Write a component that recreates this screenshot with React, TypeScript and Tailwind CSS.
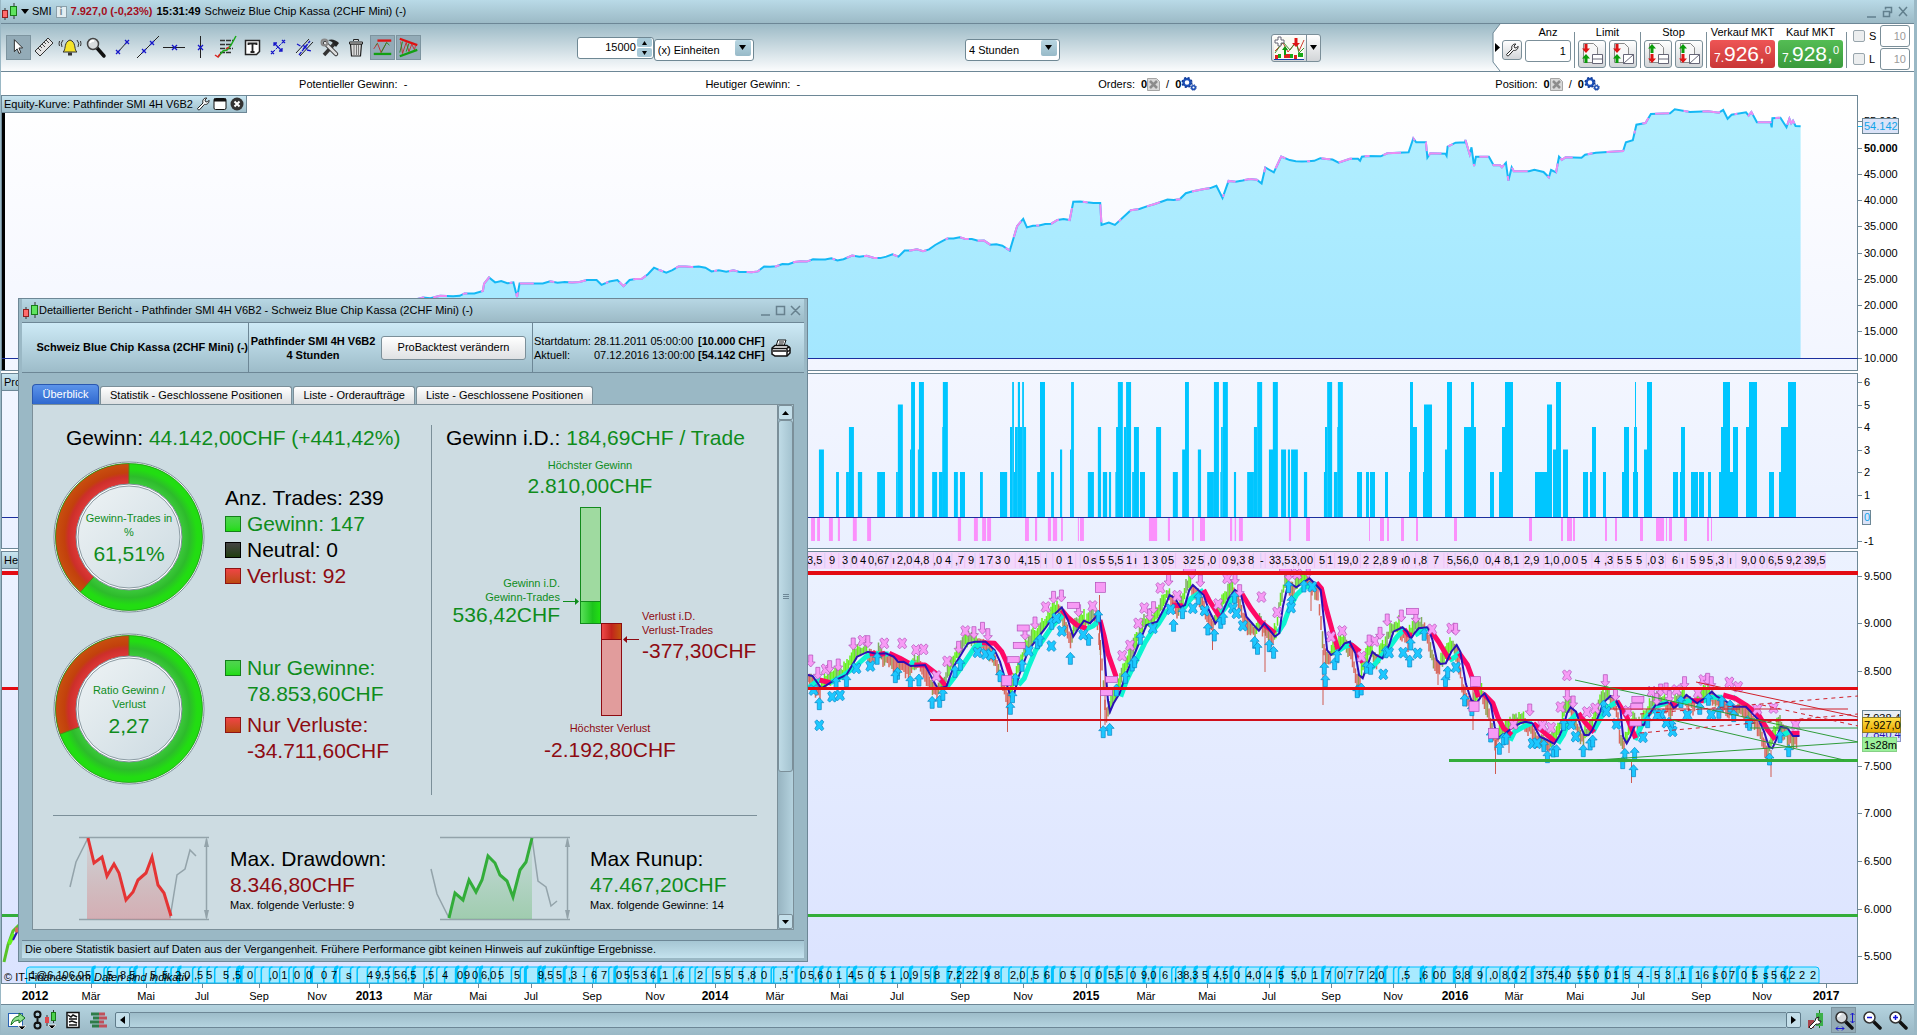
import type { ReactNode } from 'react';

type Point = [number, number];

// digitised tracks are stored in their own grid and scaled to chart units here
const place = (ox: number, oy: number, sx: number, sy: number, pts: Point[]): Point[] =>
  pts.map(([x, y]) => [ox + x / sx, oy + y / sy]);

const left = (pts: Point[]) => place(800, 360, 2.8, 3, pts);
const right = (pts: Point[]) => place(1350, 540, 2.765, 3, pts);
const line = (pts: Point[]) => pts.map(([x, y]) => `${x.toFixed(1)},${y.toFixed(1)}`).join(' ');

// small repeatable noise source, so the drawing is the same on each render
const noise = (n: number) => {
  const v = Math.sin(n * 127.1) * 43758.5453;
  return v - Math.floor(v);
};

/* ---------- equity curve ---------- */

const equityCourse: Point[] = [
  ...place(0, 0, 0.818, 0.818, [
    [340, 245], [352, 244], [360, 242], [376, 242], [380, 240], [388, 240], [395, 238], [396, 232], [400, 227], [405, 231], [420, 231], [423, 243], [425, 232], [432, 232], [450, 230],
    [468, 231], [480, 229], [488, 229], [492, 233], [505, 229], [510, 234], [515, 229], [525, 228], [535, 219], [545, 223], [555, 218], [577, 219],
    [582, 222], [600, 221], [620, 222], [625, 218], [640, 216], [660, 214], [665, 212], [690, 212], [697, 209], [715, 211], [730, 208], [735, 210],
    [740, 205], [760, 204], [775, 195], [785, 194], [820, 201], [826, 205], [832, 185], [837, 179], [840, 186], [860, 183], [865, 180], [875, 180],
    [878, 165], [900, 166], [901, 184], [907, 182], [912, 184], [925, 172], [932, 171], [950, 165], [965, 163], [970, 158], [995, 152], [1000, 162],
    [1005, 148], [1028, 147], [1032, 150], [1035, 137], [1042, 141], [1048, 128], [1055, 131], [1065, 132], [1085, 130], [1095, 133],
  ]),
  ...place(1350, 90, 2.765, 3, [
    [0, 206], [22, 206], [28, 212], [33, 200], [48, 198], [85, 199], [103, 190], [162, 187], [175, 145], [183, 157], [210, 157], [214, 203], [222, 190],
    [264, 191], [267, 197], [270, 170], [292, 158], [318, 157], [319, 150], [331, 193], [336, 172], [343, 228], [348, 200], [384, 200], [397, 226],
    [415, 226], [420, 232], [431, 218], [438, 272], [447, 232], [453, 244], [495, 244], [510, 239], [535, 246], [550, 262], [556, 240], [570, 247],
    [578, 200], [586, 210], [596, 202], [640, 203], [650, 194], [680, 188], [755, 183], [763, 157], [782, 151], [792, 104], [817, 99], [832, 72],
    [885, 70], [898, 58], [940, 66], [990, 64], [1020, 68], [1032, 60], [1044, 86], [1055, 74], [1095, 67], [1102, 77], [1110, 66], [1125, 97],
    [1163, 97], [1166, 112], [1168, 85], [1190, 83], [1207, 112], [1215, 86], [1220, 100], [1225, 92], [1232, 108], [1246, 109],
  ]),
];

const equity: Point[] = equityCourse.flatMap((p, i) => {
  const next = equityCourse[i + 1];
  if (!next || next[0] - p[0] < 12 || p[0] > 1345) return [p];
  const steps = Math.floor((next[0] - p[0]) / 6);
  return [p, ...Array.from({ length: steps - 1 }, (_, k): Point => {
    const t = (k + 1) / steps;
    return [p[0] + (next[0] - p[0]) * t, p[1] + (next[1] - p[1]) * t + (noise(i * 31 + k) - 0.5) * 3];
  })];
});

/* ---------- position bars: [x, width, units] ---------- */

const barsLeft = [
  [53, 14, 3], [101, 8, 2], [129, 8, 2], [137, 14, 4], [162, 12, 2], [216, 22, 2], [269, 5, 2], [274, 14, 5], [308, 3, 3], [311, 11, 6], [330, 3, 3], [333, 14, 6],
  [370, 14, 2], [389, 11, 2], [398, 2, 4], [400, 14, 6], [431, 11, 2], [448, 14, 2], [504, 8, 2], [560, 20, 2], [588, 6, 4], [594, 5, 6], [599, 4, 2], [602, 8, 4],
  [610, 6, 6], [616, 6, 4], [622, 5, 6], [627, 6, 4], [664, 8, 2], [672, 14, 6], [703, 8, 2], [728, 6, 3], [756, 3, 3], [759, 8, 6], [806, 17, 2],
  [834, 9, 4], [848, 12, 2], [865, 6, 2], [883, 4, 2], [885, 6, 4], [890, 14, 6], [907, 6, 4], [913, 14, 6], [930, 5, 2], [935, 14, 4], [952, 14, 2],
  [997, 14, 4], [1044, 14, 2], [1070, 8, 3], [1078, 11, 6], [1114, 9, 3], [1140, 19, 2], [1159, 14, 6], [1177, 2, 2], [1179, 5, 4], [1184, 14, 6],
  [1215, 6, 2], [1252, 19, 2], [1271, 9, 4], [1280, 14, 6], [1313, 12, 3], [1324, 14, 6], [1347, 14, 3], [1366, 6, 3], [1375, 19, 3], [1411, 9, 2],
  [1467, 4, 2], [1470, 6, 4], [1476, 14, 6], [1495, 10, 2], [1504, 2, 4], [1506, 14, 6],
  [31, 11, -1], [48, 8, -1], [81, 11, -1], [106, 6, -1], [148, 11, -1], [188, 11, -1], [442, 9, -1], [487, 11, -1], [510, 11, -1], [524, 11, -1],
  [630, 11, -1], [658, 6, -1], [694, 9, -1], [708, 12, -1], [731, 5, -1], [778, 3, -1], [784, 11, -1], [977, 23, -1], [1030, 6, -1], [1098, 5, -1],
  [1120, 14, -1], [1204, 6, -1], [1217, 4, -1], [1229, 11, -1], [1369, 6, -1], [1417, 11, -1],
];

const barsRight = [
  [51, 15, 2], [78, 9, 2], [90, 15, 2], [135, 9, 2], [207, 3, 2], [210, 9, 6], [219, 12, 4], [249, 3, 2], [252, 24, 5], [315, 6, 3], [321, 15, 6],
  [372, 21, 4], [393, 9, 6], [402, 6, 4], [450, 12, 2], [477, 9, 2], [486, 9, 4], [495, 24, 6], [585, 36, 2], [621, 15, 5], [639, 9, 3], [648, 15, 6],
  [669, 15, 3], [729, 15, 2], [750, 6, 2], [756, 12, 4], [789, 9, 2], [846, 6, 2], [852, 15, 4], [879, 3, 2], [882, 9, 4], [885, 3, 6], [891, 3, 2],
  [912, 9, 3], [921, 15, 6], [999, 15, 2], [1020, 3, 2], [1023, 12, 4], [1053, 21, 2], [1077, 15, 2], [1104, 9, 2], [1137, 6, 2], [1143, 6, 4],
  [1149, 21, 6], [1170, 9, 2], [1179, 15, 4], [1218, 9, 4], [1227, 24, 6], [1287, 15, 2], [1317, 6, 2], [1323, 21, 4], [1344, 24, 6],
  [87, 3, -1], [120, 12, -1], [141, 6, -1], [183, 9, -1], [228, 6, -1], [342, 9, -1], [567, 9, -1], [663, 6, -1], [681, 15, -1], [699, 6, -1],
  [795, 6, -1], [825, 6, -1], [900, 9, -1], [948, 24, -1], [978, 3, -1], [987, 9, -1], [1032, 9, -1], [1101, 6, -1], [1113, 3, -1],
];

const bars = [
  ...barsLeft.map(([x, w, v]) => ({ x: 800 + x / 2.8, w: w / 2.8, v })),
  ...barsRight.map(([x, w, v]) => ({ x: 1340 + x / 3, w: w / 3, v })),
];

/* ---------- price, averages and markers ---------- */

const average: Point[] = [
  ...left([
    [22, 945], [35, 948], [60, 985], [90, 965], [130, 945], [160, 890], [190, 875], [215, 882], [240, 880], [262, 890], [275, 906], [290, 905], [310, 918], [350, 915],
    [370, 955], [385, 985], [410, 980], [430, 920], [470, 850], [490, 845], [520, 845], [545, 870], [560, 905], [575, 960], [588, 1005], [600, 1000],
    [612, 950], [640, 870], [665, 835], [690, 800], [715, 760], [733, 742], [750, 780], [765, 830], [780, 805], [795, 782], [812, 790], [825, 775],
    [838, 758], [852, 880], [862, 1020], [868, 1055], [878, 1030], [895, 1000], [912, 945], [930, 900], [970, 795], [1000, 785], [1020, 745],
    [1035, 705], [1050, 715], [1065, 742], [1078, 735], [1090, 690], [1100, 675], [1115, 690], [1130, 705], [1145, 750], [1163, 790], [1180, 765],
    [1200, 715], [1218, 690], [1235, 705], [1250, 770], [1270, 795], [1285, 812], [1300, 790], [1330, 830], [1342, 820], [1352, 740], [1365, 680],
    [1375, 672], [1390, 682], [1405, 670], [1427, 655], [1445, 675], [1458, 690], [1468, 790], [1476, 870], [1487, 885], [1510, 870], [1525, 850], [1540, 845],
  ]),
  ...right([
    [0, 308], [15, 340], [25, 405], [35, 415], [50, 370], [62, 335], [72, 345], [90, 355], [108, 315], [120, 275], [145, 262], [158, 275], [168, 297],
    [178, 280], [190, 265], [215, 262], [228, 300], [240, 360], [250, 372], [265, 370], [280, 335], [295, 315], [305, 335], [320, 430], [335, 480],
    [350, 490], [362, 470], [372, 460], [390, 495], [400, 560], [410, 595], [420, 585], [430, 580], [450, 562], [470, 550], [485, 545], [505, 550],
    [525, 590], [545, 600], [565, 612], [580, 585], [590, 560], [600, 520], [610, 502], [625, 515], [640, 565], [648, 585], [660, 585], [670, 570],
    [690, 520], [700, 488], [720, 468], [735, 478], [748, 510], [755, 590], [765, 610], [775, 590], [790, 550], [812, 555], [830, 520], [845, 495],
    [870, 490], [885, 485], [895, 505], [912, 490], [930, 465], [942, 475], [960, 490], [980, 475], [1000, 455], [1015, 470], [1035, 480],
    [1060, 500], [1095, 500], [1130, 540], [1145, 575], [1158, 620], [1168, 625], [1180, 595], [1190, 560], [1210, 565], [1225, 588], [1243, 588],
  ]),
];

const rising: Point[][] = [
  ...[
    [[22, 985], [45, 965], [60, 960]], [[85, 968], [120, 948], [160, 915], [185, 890], [200, 882]], [[212, 880], [222, 882]], [[238, 882], [248, 882]],
    [[308, 905], [320, 912]], [[412, 980], [430, 955], [450, 925], [490, 860], [520, 848]],
    [[612, 975], [628, 955], [640, 920], [660, 870], [680, 840], [705, 800], [735, 765]], [[800, 808], [820, 798], [840, 780]],
    [[898, 1010], [915, 960], [940, 905], [965, 850], [985, 815], [1005, 790], [1025, 755], [1045, 740]], [[1075, 745], [1095, 715], [1130, 690]],
    [[1170, 770], [1190, 745], [1222, 700]], [[1338, 818], [1355, 790], [1370, 745], [1390, 705], [1412, 682], [1450, 675]], [[1500, 878], [1525, 860], [1548, 852]],
  ].map((s) => left(s as Point[])),
  ...[
    [[0, 312], [6, 318]], [[60, 385], [85, 350], [110, 320], [130, 290], [152, 265]], [[180, 285], [200, 272], [215, 265]], [[275, 362], [290, 350], [303, 338]],
    [[443, 602], [455, 575], [480, 560], [505, 548]], [[575, 610], [590, 585], [605, 545], [630, 518]], [[672, 575], [690, 540], [710, 505], [738, 485]],
    [[788, 600], [805, 560], [820, 530], [845, 500], [880, 485]], [[905, 492], [925, 485], [948, 480]], [[975, 485], [995, 472], [1030, 472]], [[1058, 470], [1068, 480]],
    [[1196, 585], [1215, 575]],
  ].map((s) => right(s as Point[])),
];

const falling: Point[][] = [
  ...[
    [[55, 960], [85, 968]], [[195, 882], [212, 880]], [[222, 884], [238, 880]], [[250, 880], [280, 895], [305, 910]], [[320, 915], [350, 915], [380, 940], [410, 980]],
    [[510, 848], [545, 850], [565, 875], [578, 905], [590, 945]], [[733, 750], [750, 772], [775, 795], [802, 806]],
    [[840, 780], [852, 830], [862, 880], [885, 950]], [[1042, 735], [1072, 738]], [[1130, 690], [1145, 720], [1175, 770]],
    [[1238, 702], [1262, 745], [1290, 785], [1330, 820]], [[1446, 668], [1460, 685], [1472, 740], [1490, 810], [1506, 868]], [[1545, 855], [1568, 875]],
  ].map((s) => left(s as Point[])),
  ...[
    [[0, 312], [15, 325], [35, 368]], [[150, 268], [162, 285], [172, 285]], [[222, 270], [245, 305], [275, 360]], [[302, 340], [325, 375], [340, 420], [355, 472]],
    [[370, 462], [395, 490], [410, 535], [425, 565], [447, 585]], [[507, 550], [540, 580], [568, 606]], [[632, 520], [652, 550], [675, 577]],
    [[738, 482], [765, 530], [790, 595]], [[882, 485], [905, 500]], [[945, 482], [978, 482]], [[1032, 465], [1065, 475], [1095, 495], [1130, 525], [1155, 570], [1176, 598]],
    [[1220, 580], [1243, 580]],
  ].map((s) => right(s as Point[])),
];

const pinkCross = [
  ...left([[72, 928], [175, 842], [236, 850], [286, 850], [325, 870], [346, 868], [412, 904], [382, 948], [463, 813], [688, 741], [819, 738], [902, 887], [924, 856], [947, 790], [964, 744], [1009, 684], [1056, 707], [1171, 732], [1196, 655], [1292, 711], [1336, 757], [1392, 642], [1518, 813], [1487, 830]]),
  ...right([[32, 350], [68, 303], [227, 268], [280, 265], [600, 406], [452, 553], [532, 556], [556, 563], [582, 501], [655, 516], [678, 505], [769, 513], [834, 455], [903, 450], [962, 458], [977, 420], [1049, 427], [1073, 440], [1126, 508], [1171, 504], [1232, 555]]),
];
const pinkDown = [
  ...left([[30, 903], [50, 940], [83, 920], [107, 915], [149, 852], [190, 845], [444, 862], [487, 818], [511, 805], [526, 824], [630, 822], [658, 789], [710, 712], [732, 708], [780, 752], [979, 765], [990, 743], [1032, 660], [1097, 640], [1121, 663], [1218, 656], [1231, 692], [1368, 645], [1423, 635]]),
  ...right([[53, 303], [83, 280], [103, 240], [142, 228], [182, 232], [292, 268], [497, 510], [601, 467], [617, 486], [706, 422], [734, 465], [848, 478], [859, 450], [874, 447], [883, 470], [925, 428], [989, 418], [999, 428]]),
];
const pinkWide = [
  ...left([[625, 804], [614, 856], [597, 899], [766, 736], [872, 958], [858, 998], [1090, 632], [1360, 632]]),
  ...right([[173, 214], [796, 478], [793, 499], [790, 549]]),
];
const pinkSquare = [...left([[841, 682], [579, 962]]), ...right([[347, 425], [343, 499], [397, 580]])];
const cyanUp = [
  ...left([[54, 1031], [101, 968], [130, 962], [216, 895], [273, 940], [267, 950], [309, 965], [333, 960], [370, 1027], [391, 1024], [400, 1003], [434, 934], [449, 913], [560, 947], [603, 958], [595, 1010], [589, 1045], [622, 916], [665, 848], [672, 840], [705, 790], [757, 895], [808, 838], [835, 768], [867, 1108], [849, 1115], [886, 990], [911, 952], [930, 915], [937, 905], [953, 835], [1046, 796], [1071, 758], [1115, 715], [1142, 807], [1160, 825], [1178, 787], [1185, 775], [1217, 712], [1273, 847], [1281, 865], [1314, 857], [1326, 877], [1368, 680], [1376, 724], [1411, 678], [1468, 925], [1471, 962], [1497, 911], [1504, 887], [1561, 992]]),
  ...right([[20, 455], [31, 447], [46, 382], [57, 385], [99, 335], [165, 363], [168, 312], [205, 283], [264, 422], [270, 396], [317, 480], [337, 509], [389, 588], [413, 625], [424, 597], [432, 595], [536, 617], [546, 650], [562, 633], [571, 632], [591, 553], [645, 632], [664, 612], [671, 603], [701, 498], [760, 643], [754, 668], [784, 692], [787, 640], [823, 545], [889, 555], [915, 485], [967, 505], [991, 478], [1020, 517], [1028, 485], [1051, 498], [1061, 527], [1099, 545], [1105, 553], [1160, 657], [1189, 590], [1213, 632]]),
];
const cyanCross = [
  ...left([[54, 1096], [90, 1010], [112, 1006], [38, 990], [158, 925], [197, 918], [497, 877], [520, 882], [535, 885], [640, 873], [704, 858], [718, 775], [733, 813], [793, 824], [988, 805], [1038, 748], [1100, 745], [1133, 752], [1212, 745], [1222, 760], [1240, 797], [1375, 743], [1434, 680]]),
  ...right([[92, 403], [108, 338], [147, 338], [187, 340], [293, 382], [505, 610], [517, 610], [612, 553], [624, 590], [709, 515], [737, 552], [810, 592], [860, 523], [850, 525], [875, 548], [892, 574], [933, 525], [999, 524]]),
];

const averageAt = (x: number) => {
  const i = average.findIndex(([px]) => px >= x);
  if (i <= 0) return average[i === 0 ? 0 : average.length - 1][1];
  const [x0, y0] = average[i - 1];
  const [x1, y1] = average[i];
  return y0 + ((y1 - y0) * (x - x0)) / (x1 - x0 || 1);
};

const candles = Array.from({ length: 660 }, (_, i) => {
  const x = 808 + i * 1.5;
  const y = averageAt(x + 3);
  const up = averageAt(x + 6) < averageAt(x - 2);
  const a = 2 + noise(i) * 8;
  const b = 2 + noise(i + 900) * 8;
  return { x, y1: y - (up ? a + 3 : a * 0.5), y2: y + (up ? b * 0.5 : b + 4), color: up ? (noise(i + 50) > 0.35 ? '#66f01e' : '#7fb060') : noise(i + 70) > 0.25 ? '#d9695f' : '#9a9a50' };
}).filter((c) => c.x < 1801);

const spikes = [
  [1007.5, 700, 732], [1100.5, 640, 728], [1105, 650, 725], [1099.5, 595, 650], [1212.5, 630, 650], [1265, 620, 672], [1323, 650, 705], [1311, 590, 611],
  [1473, 690, 730], [1495.5, 740, 774], [1631.5, 760, 783], [1771, 750, 777], [1509, 735, 753], [1438, 660, 685],
];

/* ---------- trade value strips ---------- */

const upperValues: [number, string][] = [
  [807, '3,5'], [829, '9'], [842, '3 0'], [853, "'"], [860, '4'], [868, '0,6'], [883, '7'], [892, 'ı'], [897, '2,0'], [914, '4,8'], [933, ',0'], [945, '4'], [955, ',7'],
  [968, '9'], [979, '1'], [987, '7'], [995, '3'], [1004, '0'], [1018, '4,1'], [1034, '5'], [1044, 'ı'], [1056, '0'], [1067, '1'], [1083, '0'], [1091, 's'], [1099, '5'],
  [1108, '5,5'], [1126, '1'], [1134, 'ı'], [1143, '1'], [1152, '3'], [1161, '0'], [1168, '5'], [1183, '3'], [1190, '2'], [1198, '5'], [1207, ',0'], [1222, '0'],
  [1230, '9,3'], [1248, '8'], [1260, '-'], [1269, '33,5'], [1291, '3,0'], [1307, '0'], [1319, '5'], [1327, '1'], [1337, '19,0'], [1363, '2'], [1373, '2,8'], [1391, '9'],
  [1401, 'ı0 ı'], [1418, ',8'], [1433, '7'], [1447, '5,5'], [1463, '6,0'], [1485, '0,4'], [1504, '8,1'], [1524, '2,9'], [1544, '1,0'], [1561, ',0'], [1572, '0'], [1581, '5'],
  [1594, '4'], [1604, ',3'], [1617, '5'], [1626, '5'], [1636, '5'], [1647, ',0'], [1658, '3'], [1672, '6'], [1681, 'ı'], [1690, '5'], [1699, '9'], [1707, '5'], [1715, ',3'],
  [1729, 'ı'], [1741, '9,0'], [1759, '0'], [1768, '6,5'], [1786, '9,2'], [1804, '39,5'],
];

const lowerValues: [number, string][] = [
  [30, '1@6.106,0'], [85, '5'], [107, '5'], [120, '8,5'], [150, '5'], [162, '5,'], [175, '2,0'], [194, ',5 5'], [223, '5'], [232, ',5'], [247, '0'], [269, ',0 1'], [294, '0'],
  [306, '0'], [321, '0'], [331, '7'], [346, 's'], [367, '4'], [375, '9,5'], [394, '5'], [401, '6,5'], [425, ',5'], [442, '4'], [457, '0'], [464, '9'], [472, '0'], [481, '6,0'], [498, '5'],
  [514, '5'], [538, '9,5'], [556, '5'], [568, ',3'], [582, '-'], [591, '6'], [601, '7'], [616, '0'], [624, '5'], [633, '5'], [641, '3'], [650, '6'], [659, ',1'], [675, ',6'],
  [697, '2'], [715, '5'], [725, '5'], [738, '5'], [747, ',8'], [761, '0'], [779, ',5'], [791, "'"], [800, '0'], [808, '5,6'], [826, '0'], [836, '1'], [848, '4,5'], [868, '0'], [880, '5'],
  [890, '1'], [900, ',0,9'], [924, '5'], [934, '8'], [947, '7,2'], [966, '22'], [984, '9'], [994, '8'], [1010, '2,0'], [1030, ',5'], [1044, '6'], [1060, '0'], [1070, '5'],
  [1084, '0'], [1096, '0'], [1108, '5,5'], [1130, '0'], [1141, '9,0'], [1162, '6'], [1174, ',38,3'], [1202, '5'], [1213, '4,5'], [1234, '0'], [1246, '4,0'], [1266, '4'],
  [1278, '5'], [1291, '5,0'], [1312, '1'], [1325, '7'], [1337, '0'], [1347, '7'], [1358, '7'], [1369, '2,0'], [1401, ',5'], [1419, ',6'], [1433, '0'], [1440, '0'], [1455, '3,8'],
  [1477, '9'], [1489, ',0'], [1502, '8,0'], [1520, '2'], [1536, '375,4'], [1565, '0'], [1577, '5'], [1585, '5'], [1593, '0'], [1605, '0'], [1613, '1'], [1624, '5'],
  [1637, '4'], [1646, '-'], [1654, '5'], [1665, '3'], [1677, ',1'], [1695, '1'], [1703, '6'], [1713, 's'], [1721, '0'], [1729, '7'], [1741, '0'], [1752, '5'], [1763, 's'], [1771, '5'],
  [1780, '6,2'], [1799, '2'], [1810, '2'],
];

const cells = Array.from({ length: 200 }, (_, i) => 26 + i * 8.9 + noise(i + 300) * 7).filter((x) => x < 1800 && x > 88);

const months: [number, string][] = [
  [35, '2012'], [91, 'Mär'], [146, 'Mai'], [202, 'Jul'], [259, 'Sep'], [317, 'Nov'], [369, '2013'], [423, 'Mär'], [478, 'Mai'], [531, 'Jul'], [592, 'Sep'], [655, 'Nov'],
  [715, '2014'], [775, 'Mär'], [839, 'Mai'], [897, 'Jul'], [960, 'Sep'], [1023, 'Nov'], [1086, '2015'], [1146, 'Mär'], [1207, 'Mai'], [1269, 'Jul'], [1331, 'Sep'],
  [1393, 'Nov'], [1455, '2016'], [1514, 'Mär'], [1575, 'Mai'], [1638, 'Jul'], [1701, 'Sep'], [1762, 'Nov'], [1826, '2017'],
];

/* ---------- icons ---------- */

function Candles() {
  return (
    <svg width="17" height="18" viewBox="0 0 17 18" className="shrink-0">
      <path d="M4 5v12M13 0v16" stroke="#333" />
      <rect x="1.5" y="7.5" width="5" height="7" fill="#ff6b6b" stroke="#8e1f1f" />
      <rect x="9.5" y="3.5" width="6" height="9" fill="#5fe45f" stroke="#187a18" />
    </svg>
  );
}

function Wrench() {
  return (
    <svg width="14" height="14" viewBox="0 0 14 14" className="shrink-0">
      <path d="M1.5 11.5 7 6C6 3 8 .8 10.8 1L9 3l.5 1.7 1.8.3L13 3.3C13.3 6 11 8 8.5 7.3l-5 5.5Q2 13.5 1.5 11.5Z" fill="#fff" stroke="#222" />
    </svg>
  );
}

function Gears() {
  return (
    <svg width="16" height="14" viewBox="0 0 16 14">
      <circle cx="6" cy="5.5" r="3.5" fill="none" stroke="#1c50b8" strokeWidth="2.5" />
      <circle cx="6" cy="5.5" r="4.8" fill="none" stroke="#123a94" strokeWidth="1.5" strokeDasharray="2 1.8" />
      <circle cx="12.5" cy="10.5" r="1.8" fill="none" stroke="#1c50b8" strokeWidth="1.5" />
      <circle cx="12.5" cy="10.5" r="2.8" fill="none" stroke="#123a94" strokeDasharray="1.2 1" />
    </svg>
  );
}

function DeadSheet() {
  return (
    <svg width="13" height="13" viewBox="0 0 13 13">
      <path d="M.5.5h9l3 3v9h-12z" fill="#d8d8d8" stroke="#a5a5a5" />
      <path d="m3 3 7 7M10 3l-7 7" stroke="#8c8c8c" strokeWidth="2.5" />
    </svg>
  );
}

function Magnifier({ sign }: { sign?: string }) {
  return (
    <svg width="20" height="20" viewBox="0 0 20 20">
      <path d="m11 11 7 7" stroke="#111" strokeWidth="3.5" strokeLinecap="round" />
      <circle cx="7.5" cy="7.5" r="5.5" fill={sign ? '#fff' : '#d5d9dc'} stroke="#333" strokeWidth="1.5" />
      {sign ? <path d={sign} stroke="#1414d8" strokeWidth="1.5" /> : <path d="M4.5 7a3 3 0 0 1 3-3" stroke="#fff" strokeWidth="2" fill="none" />}
    </svg>
  );
}

const blue = '#1616c8';

const tools: { name: string; on?: boolean; icon: ReactNode }[] = [
  { name: 'Zeiger', on: true, icon: <path d="M8 4v13l3-3 2 5 2-1-2-5h4z" fill="#fff" stroke="#222" /> },
  {
    name: 'Lineal',
    icon: (
      <>
        <path d="M3 16 16 3l5 5L8 21z" fill="#e4e4e4" stroke="#333" />
        <path d="m6 13 3 3m-1-5 2 2m0-4 3 3m-1-5 2 2m0-4 3 3" stroke="#444" />
      </>
    ),
  },
  {
    name: 'Alarm',
    icon: (
      <>
        <path d="M5 17c3-2 1-8 5-11q2-2 4 0c4 3 2 9 5 11z" fill="#f4e32a" stroke="#333" />
        <path d="M10 19h4" stroke="#333" strokeWidth="3" />
        <path d="M5 5Q2 8 4 12M1.5 6q-1 3 0 5M19 5q3 3 1 7m2.5-6q1 3 0 5" stroke="#333" fill="none" />
      </>
    ),
  },
  {
    name: 'Lupe',
    icon: (
      <>
        <path d="m13 13 7 8" stroke="#111" strokeWidth="3.5" strokeLinecap="round" />
        <circle cx="9" cy="9" r="5.5" fill="#d8dcde" stroke="#444" strokeWidth="1.5" />
        <path d="M6 8q1-3 4-2" stroke="#fff" strokeWidth="2" fill="none" />
      </>
    ),
  },
  {
    name: 'Segment',
    icon: (
      <>
        <path d="m8 17 9-10" stroke="#222" />
        <path d="m6 15 4 4m0-4-4 4m9-14 4 4m0-4-4 4" stroke={blue} strokeWidth="1.3" />
      </>
    ),
  },
  {
    name: 'Linie',
    icon: (
      <>
        <path d="M1 23 23 1" stroke="#222" />
        <path d="m6 14 4 4m0-4-4 4m8-12 4 4m0-4-4 4" stroke={blue} strokeWidth="1.3" />
      </>
    ),
  },
  {
    name: 'Horizontale',
    icon: (
      <>
        <path d="M1 12.5h22" stroke="#222" />
        <path d="m10 10 5 5m0-5-5 5" stroke={blue} strokeWidth="1.3" />
      </>
    ),
  },
  {
    name: 'Vertikale',
    icon: (
      <>
        <path d="M12.5 1v22" stroke="#222" />
        <path d="m10 10 5 5m0-5-5 5" stroke={blue} strokeWidth="1.3" />
      </>
    ),
  },
  {
    name: 'Fibonacci',
    icon: (
      <>
        <path d="M6 5.5h13M6 9.5h12M6 13.5h13M6 17.5h11" stroke="#333" strokeWidth="1.5" strokeDasharray="5 1" />
        <path d="m4 22 5-6 4-1 4-5 5-9" stroke="#1aa81a" strokeWidth="1.5" fill="none" />
        <path d="m1 20 3 2 2-3m6-5 3-2" stroke="#d22" strokeWidth="1.5" fill="none" />
      </>
    ),
  },
  {
    name: 'Text',
    icon: (
      <>
        <path d="M5.5 5.5h14v11l-3 3h-11z" fill="#fff" stroke="#222" strokeWidth="1.5" />
        <path d="M8.5 10V8.5h8V10M12.5 8.5v8m-2 .5h4" stroke="#222" strokeWidth="1.8" fill="none" />
      </>
    ),
  },
  {
    name: 'Pfeil',
    icon: (
      <>
        <path d="m7 17 10-10" stroke={blue} strokeDasharray="3 1" />
        <path d="m8 8 8 8m0-11 3 3m-3 0 3-3M5 16l3 3m-3 0 3-3m8-3v3h-3M8 11V8h3" stroke={blue} strokeWidth="1.3" />
      </>
    ),
  },
  {
    name: 'Kanal',
    icon: (
      <>
        <path d="M4 18 17 4M8 21 21 7" stroke="#222" />
        <path d="m5 9 5 3m5 3 4 1M7 20 18 6" stroke={blue} strokeWidth="1.3" strokeDasharray="4 1" />
        <path d="m11 10 4 4m0-4-4 4" stroke={blue} strokeWidth="1.3" />
      </>
    ),
  },
  {
    name: 'Werkzeuge',
    icon: (
      <>
        <path d="m6 20 11-12" stroke="#333" strokeWidth="3.5" />
        <path d="M10 5q6-2 11 3l-3 4-4-5z" fill="#222" />
        <path d="m7 8 11 11" stroke="#333" strokeWidth="4.5" strokeLinecap="round" />
        <path d="m7 8 11 11" stroke="#ddd" strokeWidth="2.5" strokeLinecap="round" />
        <circle cx="6.5" cy="7.5" r="3" fill="none" stroke="#888" strokeWidth="2" />
      </>
    ),
  },
  {
    name: 'Papierkorb',
    icon: (
      <>
        <path d="M6.5 9h11l-1 12h-9z" fill="#ddd" stroke="#222" strokeWidth="1.2" />
        <path d="M10 10v10m2.5-10v10m2-10v10" stroke="#777" />
        <path d="M5.5 7h13v2h-13zM9.5 6V4.500h5V6" stroke="#222" fill="#ddd" />
      </>
    ),
  },
  {
    name: 'Unterstützung',
    on: true,
    icon: (
      <>
        <path d="M7 5h15" stroke="#e01010" strokeWidth="2.5" />
        <path d="M3 19.5h19" stroke="#12a012" strokeWidth="2.5" />
        <path d="m3 14 4-6 4 10 6-11" stroke="#c03030" fill="none" />
        <path d="m5 10 2-2m4 10 6-11 3 3" stroke="#1c8f1c" fill="none" />
      </>
    ),
  },
  {
    name: 'Muster',
    on: true,
    icon: (
      <>
        <path d="m4 6 2 13 4-12 3 10 3-8 3 6 1-4" stroke="#c03030" fill="none" />
        <path d="m3 18 3-12M10 17l3-9" stroke="#1c8f1c" />
        <path d="m3 3 19 7" stroke="#e01010" strokeWidth="2.5" />
        <path d="m3 22 19-7" stroke="#12a012" strokeWidth="2.5" />
      </>
    ),
  },
];

function Arrow({ y, up }: { y: number; up?: boolean }) {
  return up ? <path d={`M7 ${y}l4 4.500H8.500v4.500h-3v-4.500H3z`} fill="#0a9c0a" /> : <path d={`M7 ${y + 9}l4-4.500H8.500V${y}h-3v4.500H3z`} fill="#dd1414" />;
}

function OrderIcon({ stop, cut }: { stop?: boolean; cut?: boolean }) {
  return (
    <svg width="26" height="26" viewBox="0 0 26 26" className="shrink-0">
      <path d="M4.5 2.500h10l4 4v15h-14z" fill="#f7f7f7" stroke="#888" />
      <Arrow y={3} up={stop} />
      <Arrow y={13} up={!stop} />
      <path d={cut ? 'M13.500 22.500v-9h10v9zm0 0 10-9' : 'M13.500 13.500h10v9h-10zm0 4.500h10'} fill="#fff" stroke="#667" />
    </svg>
  );
}

function SpinArrow({ up }: { up?: boolean }) {
  return (
    <button aria-label={up ? 'Mehr' : 'Weniger'} className="flex h-[9px] w-[15px] items-center justify-center rounded-xs bg-[#a9cad8]">
      <svg width="5" height="4" viewBox="0 0 5 4">
        <path d={up ? 'M0 4h5L2.500 0z' : 'M0 0h5L2.500 4z'} />
      </svg>
    </button>
  );
}

function Dropdown({ label, value, width }: { label: string; value: string; width: string }) {
  return (
    <div className={`relative h-[22px] ${width}`}>
      <select aria-label={label} className="h-full w-full appearance-none rounded-[3px] border border-[#6f8894] bg-white pl-[3px] text-[11px] outline-none">
        <option>{value}</option>
      </select>
      <span className="pointer-events-none absolute top-[3px] right-[3px] flex h-4 w-4 items-center justify-center rounded-xs bg-gradient-to-b from-[#b8d6e2] to-[#98bac8]">
        <svg width="7" height="5" viewBox="0 0 7 5">
          <path d="M0 0h7L3.500 5z" />
        </svg>
      </span>
    </div>
  );
}

/* ---------- main window ---------- */

function TitleBar() {
  return (
    <header className="flex h-6 items-center border-b border-[#6d8796] bg-gradient-to-b from-[#b9dae7] to-[#9cbac6] text-[11px]">
      <Candles />
      <svg width="8" height="5" viewBox="0 0 8 5" className="mx-[3px]">
        <path d="M0 0h8L4 5z" />
      </svg>
      <span>SMI</span>
      <span className="mx-1 flex h-3 w-[11px] items-center justify-center border border-[#8ba0aa] bg-[#e4eef2] font-bold text-[#7c8f98]">i</span>
      <b className="text-[#a30d1c]">7.927,0 (-0,23%)</b>
      <b className="mx-1">15:31:49</b>
      <span>Schweiz Blue Chip Kassa (2CHF Mini) (-)</span>
      <div className="ml-auto pr-1">
        <svg width="46" height="14" viewBox="0 0 46 14" fill="none" stroke="#62808e" strokeWidth="1.5">
          <path d="M3 12h9M19.500 6.500h6v5h-6zM21.500 4.500v-2h6v5h-2M35 2l8 9M43 2l-8 9" />
        </svg>
      </div>
    </header>
  );
}

function QuoteButton({ label, big, tone }: { label: string; big: string; tone: string }) {
  return (
    <div className="flex flex-col items-center">
      <span className="h-4 leading-[16px]">{label}</span>
      <button aria-label={label} className={`flex h-7 w-[65px] justify-center rounded-[3px] text-white ${tone}`}>
        <span className="self-end pb-px text-[12px]">7.</span>
        <span className="text-[21px] leading-[28px]">{big},</span>
        <sup className="top-0 pt-1 text-[11px] leading-[12px]">0</sup>
      </button>
    </div>
  );
}

const smallButton = 'flex h-7 w-7 items-center justify-center rounded-[3px] border border-[#7b8f99] bg-gradient-to-b from-white to-[#d2d5d8]';

function TradePanel() {
  return (
    <div className="flex h-[47px] items-stretch self-start text-[11px]">
      <svg width="10" height="47" viewBox="0 0 10 47">
        <path d="M10 0h-2L1 9v29l7 9h2z" fill="#fff" />
        <path d="M8 0 1 9v29l7 9" fill="none" stroke="#6d8796" />
        <path d="m3 19 5 4.500L3 28z" />
      </svg>
      <div className="flex gap-[3px] bg-white pr-1">
        <button aria-label="Einstellungen" className="mt-4 flex h-5 w-5 items-center justify-center rounded-[3px] border border-[#7b8f99] bg-gradient-to-b from-white to-[#d2d5d8]">
          <Wrench />
        </button>
        <label className="flex w-[46px] flex-col items-center leading-[16px]">
          Anz
          <input defaultValue="1" className="h-[22px] w-full rounded-[3px] border border-[#7b8f99] pr-1 text-right" />
        </label>
        <span className="mt-2 h-[36px] w-px bg-[#7b8f99]" />
        <div className="flex flex-col items-center leading-[16px]">
          Limit
          <div className="flex gap-[3px]">
            <button aria-label="Limit" className={smallButton}><OrderIcon /></button>
            <button aria-label="Limit Linie" className={smallButton}><OrderIcon cut /></button>
          </div>
        </div>
        <span className="mt-2 h-[36px] w-px bg-[#7b8f99]" />
        <div className="flex flex-col items-center leading-[16px]">
          Stop
          <div className="flex gap-[3px]">
            <button aria-label="Stop" className={smallButton}><OrderIcon stop /></button>
            <button aria-label="Stop Linie" className={smallButton}><OrderIcon stop cut /></button>
          </div>
        </div>
        <span className="mt-2 h-[36px] w-px bg-[#7b8f99]" />
        <QuoteButton label="Verkauf MKT" big="926" tone="bg-gradient-to-b from-[#ee5555] to-[#c93636]" />
        <QuoteButton label="Kauf MKT" big="928" tone="bg-gradient-to-b from-[#54bd54] to-[#3a9a3c]" />
        <span className="mt-2 h-[36px] w-px bg-[#7b8f99]" />
        <div className="flex flex-col gap-px pt-px pl-[3px]">
          {['S', 'L'].map((side) => (
            <div key={side} className="flex items-center">
              <input id={side} type="checkbox" className="h-3 w-3 appearance-none rounded-xs border border-[#98a5ac] bg-[#eceeef]" />
              <label htmlFor={side} className="w-[15px] pl-1">{side}</label>
              <input aria-label={`Abstand ${side}`} defaultValue="10" className="h-[22px] w-[30px] rounded-[3px] border border-[#7b8f99] pr-[3px] text-right text-[#9a9a9a]" />
            </div>
          ))}
        </div>
      </div>
    </div>
  );
}

function Toolbar() {
  return (
    <div className="flex h-12 items-center border-b border-[#6d8796] bg-gradient-to-b from-[#9cbac6] to-[#fbfcfd] pl-[5px]">
      <div className="flex gap-px">
        {tools.map((tool) => (
          <button key={tool.name} aria-label={tool.name} className={tool.on ? 'h-[25px] w-[25px] border border-[#7d949f] bg-[#93abb7]' : 'h-[25px] w-[25px]'}>
            <svg viewBox="0 0 25 25" fill="none">{tool.icon}</svg>
          </button>
        ))}
      </div>
      <div className="grow-[31]" />
      <div className="flex h-[22px] w-[77px] items-center rounded-[3px] border border-[#6f8894] bg-white pr-px">
        <input aria-label="Anzahl Einheiten" defaultValue="15000" className="w-full min-w-0 pr-px text-right text-[11px] outline-none" />
        <div className="flex shrink-0 flex-col gap-px">
          <SpinArrow up />
          <SpinArrow />
        </div>
      </div>
      <Dropdown label="Einheit" value="(x) Einheiten" width="w-[100px]" />
      <div className="grow-[42]" />
      <Dropdown label="Zeitrahmen" value="4 Stunden" width="w-[95px]" />
      <div className="grow-[42]" />
      <button aria-label="Indikator hinzufügen" className="flex h-7 w-[50px] items-center rounded-[3px] border border-[#7b8f99] bg-gradient-to-b from-white to-[#d2d5d8]">
        <svg width="34" height="26" viewBox="0 0 34 26">
          <rect x="2" y="2" width="30" height="22" fill="#fafaf2" />
          <path d="m3 16 8-8 5 9 8-10 3 9 5-11" fill="none" stroke="#cf3b30" />
          <path d="m3 18 8-11 7 8 6-8 3 11 5-5" fill="none" stroke="#3a8f2c" />
          <path d="M3 22h3m6-1h6m4 1h3" stroke="#d22" strokeWidth="4" />
          <path d="M6 21h3m9 0h3m5-1h5" stroke="#18a818" strokeWidth="4" />
          <path d="m13 11 3 4h-2v5h-2v-5h-2z" fill="#0d9a0d" />
          <path d="m24 12-4-4h2.500V3h3v5H28z" fill="#dd1414" />
          <path d="M3 5h3V2h3v3h3v3H9v3H6V8H3z" fill="#fff" stroke="#667" />
          <path d="M2 24.500h30" stroke="#1a3fae" />
        </svg>
        <span className="flex h-full grow items-center justify-center border-l border-[#7b8f99]">
          <svg width="7" height="5" viewBox="0 0 7 5"><path d="M0 0h7L3.500 5z" /></svg>
        </span>
      </button>
      <div className="grow-[34]" />
      <TradePanel />
    </div>
  );
}

function InfoRow() {
  return (
    <div className="flex h-[23px] items-center justify-evenly bg-white pt-px pr-4 text-[11px]">
      <span>Potentieller Gewinn:&nbsp; -</span>
      <span>Heutiger Gewinn:&nbsp; -</span>
      {['Orders:', 'Position:'].map((label) => (
        <span key={label} className="flex items-center">
          {label} <b className="ml-1.5">0</b>
          <DeadSheet />
          <span className="mx-1.5">/</span>
          <b>0</b>
          <Gears />
        </span>
      ))}
    </div>
  );
}

function AxisLabel({ y, children, bold }: { y: number; children: ReactNode; bold?: boolean }) {
  return (
    <>
      <path d={`M1858 ${y}.5h4`} stroke="#6d8796" />
      <text x="1864" y={y + 4} fontWeight={bold ? 700 : 400}>{children}</text>
    </>
  );
}

function EquityChart() {
  const outline = line(equity);
  return (
    <svg viewBox="1 95 1913 278" className="block w-full text-[11px]">
      <defs>
        <linearGradient id="equityBack" x2="0" y2="1"><stop stopColor="#fff" /><stop offset="1" stopColor="#f2f5ff" /></linearGradient>
        <linearGradient id="equityFill" x2="0" y2="1"><stop stopColor="#b2efff" /><stop offset="1" stopColor="#a4e7ff" /></linearGradient>
      </defs>
      <rect x="1.5" y="95.5" width="1856" height="275" fill="url(#equityBack)" stroke="#6d8796" />
      <polygon points={`415,358 ${outline} 1800.6,358`} fill="url(#equityFill)" />
      <polyline points={outline} fill="none" stroke="#14b8f5" strokeWidth="2" />
      <polyline points={outline} fill="none" stroke="#ee8cf3" strokeWidth="2" strokeDasharray="9 9 14 16 5 14 18 22 3 12" />
      <path d="M3.5 96v274" stroke="#000" strokeWidth="3" />
      <path d="M2 358.5h1856" stroke="#1c2f9e" />
      <AxisLabel y={121}>55.000</AxisLabel>
      <AxisLabel y={148} bold>50.000</AxisLabel>
      {[174, 200, 226, 253, 279, 305, 331, 358].map((y, i) => (
        <AxisLabel key={y} y={y}>{45 - i * 5}.000</AxisLabel>
      ))}
      <path d="M1858 126.5h5" stroke="#14b8f5" />
      <rect x="1862.5" y="118.5" width="36" height="15" fill="#dbe3f8" stroke="#6d8796" />
      <text x="1864" y="130" fill="#14a4e8">54.142</text>
    </svg>
  );
}

function PositionChart() {
  return (
    <svg viewBox="1 373 1913 178" className="block w-full text-[11px]">
      <defs>
        <linearGradient id="posBack" x2="0" y2="1"><stop stopColor="#f3f6ff" /><stop offset="1" stopColor="#eaf0ff" /></linearGradient>
      </defs>
      <rect x="1.5" y="373.5" width="1856" height="175" fill="url(#posBack)" stroke="#6d8796" />
      {bars.map((b, i) =>
        b.v > 0 ? (
          <rect key={i} x={b.x} y={517 - b.v * 22.5} width={b.w} height={b.v * 22.5} fill="#00c6ff" />
        ) : (
          <rect key={i} x={b.x} y={518} width={b.w} height={23} fill="#fb90fb" />
        ),
      )}
      <path d="M2 517.5h1856" stroke="#1c2f9e" />
      {[6, 5, 4, 3, 2, 1].map((n) => (
        <AxisLabel key={n} y={Math.round(517 - n * 22.5)}>{n}</AxisLabel>
      ))}
      <AxisLabel y={541}>-1</AxisLabel>
      <rect x="1862.5" y="510.5" width="8" height="14" fill="#dbe3f8" stroke="#6d8796" />
      <text x="1864" y="521" fill="#14a4e8">0</text>
    </svg>
  );
}

function PriceChart() {
  return (
    <svg viewBox="1 551 1913 453" className="block w-full text-[11px]">
      <defs>
        <linearGradient id="priceBack" x2="0" y2="1"><stop stopColor="#ecf2ff" /><stop offset="1" stopColor="#dbe3ff" /></linearGradient>
        <linearGradient id="quoteBack" x2="0" y2="1"><stop stopColor="#ffe14a" /><stop offset="1" stopColor="#e8a800" /></linearGradient>
        <clipPath id="priceClip"><rect x="2" y="569" width="1856" height="414" /></clipPath>
        <path id="cross" d="M-4.5-3.5-2.500-5.500 0-3 2.500-5.500 4.500-3.500 2.500 0 4.500 3.500 2.500 5.500 0 3-2.500 5.500-4.500 3.500-2.500 0Z" />
        <path id="arrow" d="M0-6 4.500-1H2V6H-2V-1H-4.500Z" />
      </defs>
      <rect x="1.5" y="551.5" width="1856" height="432" fill="url(#priceBack)" stroke="#6d8796" />

      <rect x="2" y="552" width="1824" height="17" rx="2" fill="#f3d8fb" />
      {Array.from({ length: 150 }, (_, i) => (
        <path key={i} d={`M${(808 + i * 6.8 + noise(i) * 4).toFixed(1)} 553v15`} stroke={noise(i + 9) > 0.7 ? '#d5d0f8' : '#efc4f7'} />
      ))}
      {upperValues.map(([x, value]) => (
        <text key={x} x={x} y="564">{value}</text>
      ))}

      <g clipPath="url(#priceClip)">
        {candles.map((c) => (
          <path key={c.x} d={`M${c.x} ${c.y1.toFixed(1)}V${c.y2.toFixed(1)}`} stroke={c.color} strokeWidth="1.5" />
        ))}
        {spikes.map(([x, y1, y2]) => (
          <path key={x} d={`M${x} ${y1}V${y2}`} stroke="#cf5a50" />
        ))}
        <g fill="none" strokeWidth="5" strokeLinejoin="round">
          {rising.map((s, i) => <polyline key={i} points={line(s)} stroke="#0cf5d2" />)}
          {falling.map((s, i) => <polyline key={i} points={line(s)} stroke="#ff0866" />)}
        </g>
        <polyline points={line(average)} fill="none" stroke="#2a12b4" strokeWidth="2" />
        <g fill="#1cc8ff" stroke="#0a86c4" strokeWidth=".7">
          {cyanUp.map(([x, y], i) => <use key={i} href="#arrow" x={x} y={y} />)}
          {cyanCross.map(([x, y], i) => <use key={i} href="#cross" x={x} y={y} />)}
        </g>
        <g fill="#f79bf5" stroke="#b04fb8" strokeWidth=".7">
          {pinkCross.map(([x, y], i) => <use key={i} href="#cross" x={x} y={y} />)}
          {pinkDown.map(([x, y], i) => <use key={i} href="#arrow" transform={`translate(${x} ${y}) scale(1 -1)`} />)}
          {pinkWide.map(([x, y], i) => <rect key={i} x={x - 6} y={y - 3} width="12" height="6" />)}
          {pinkSquare.map(([x, y], i) => <rect key={i} x={x - 5} y={y - 5} width="10" height="10" />)}
        </g>
        {/* run-in of the price at the very left */}
        <path d="M4 962 8 945l5-14 6-6" stroke="#58c32a" strokeWidth="3" fill="none" />
        <path d="m9 944 5-10" stroke="#66f01e" strokeWidth="4" />
        <path d="m13 940 5-10" stroke="#2a12b4" strokeWidth="2" />
        <path d="M15 930h3" stroke="#d9695f" strokeWidth="5" />
      </g>

      <path d="M2 573h1856" stroke="#e30b13" strokeWidth="4" />
      <path d="M2 688.5h1856" stroke="#e30b13" strokeWidth="3" />
      <path d="M930 720h928" stroke="#d0101c" strokeWidth="2" />
      <path d="M1449 760.5h409M2 915.5h1856" stroke="#33ad3a" strokeWidth="3" />
      <g fill="none" stroke="#2f9c3a">
        <path d="M1575 680 1858 742M1672 720l172 40M1750 728h108M1597 760l261-18" />
        <path d="M1696 682l162 35M1610 709h80M1700 709h40M1755 709h25M1800 709h48" stroke="#d0202a" />
        <path d="M1640 733l218-19M1762 705l96 21M1640 714l218-18" stroke="#d0202a" strokeDasharray="4 4" />
      </g>

      <path d="M26.5 983v-13q0-3 3-3H1816q3 0 3 3v13z" fill="#a8eaff" stroke="#00bfff" />
      {cells.map((x) => (
        <path key={x} d={`M${x.toFixed(1)} 983v-13q0-3 3-3`} fill="none" stroke="#00c3ff" strokeWidth={noise(x) > 0.7 ? 3 : 1.5} />
      ))}
      {lowerValues.map(([x, value]) => (
        <text key={x} x={x} y="979">{value}</text>
      ))}
      <text x="4" y="981">© IT-Finance.com</text>
      <text x="94" y="981" fontStyle="italic">Daten sind indikativ</text>

      {[576, 623, 671].map((y, i) => <AxisLabel key={y} y={y}>{['9.500', '9.000', '8.500'][i]}</AxisLabel>)}
      {[766, 813, 861, 909, 956].map((y, i) => <AxisLabel key={y} y={y}>{['7.500', '7.000', '6.500', '6.000', '5.500'][i]}</AxisLabel>)}
      <rect x="1862.5" y="710.5" width="38" height="15" fill="#e8edf4" stroke="#6d8796" />
      <text x="1864" y="722">7.938,4</text>
      <rect x="1862.5" y="726.5" width="38" height="15" fill="#dbe3f8" stroke="#8a93c8" />
      <text x="1864" y="738" fill="#2a12b4">7.840,4</text>
      <rect x="1862.5" y="717.5" width="38" height="15" fill="url(#quoteBack)" stroke="#8b7b2c" />
      <text x="1864" y="729">7.927,0</text>
      <rect x="1862.5" y="737.5" width="34" height="14" fill="#9af09a" stroke="#86d086" />
      <text x="1864" y="749">1s28m</text>

      {months.map(([x, name]) => (
        <g key={x}>
          <path d={`M${x}.5 984v4`} stroke="#6d8796" />
          <text x={x} y="1000" textAnchor="middle" className={name.startsWith('20') ? 'text-[12px] font-bold' : ''}>{name}</text>
        </g>
      ))}
    </svg>
  );
}

function PaneTitle({ children }: { children: ReactNode }) {
  return (
    <div className="absolute top-0 left-0 flex h-[18px] items-center gap-[3px] border border-[#6d8796] bg-gradient-to-b from-[#c9e6f1] to-[#9fbfcc] px-[2px] text-[11px] whitespace-nowrap">
      {children}
    </div>
  );
}

function BottomBar() {
  return (
    <footer className="flex h-[31px] items-center gap-1.5 border-t border-[#6d8796] bg-gradient-to-b from-[#b4d3df] to-[#9ab8c5] px-1.5">
      <button aria-label="Exportieren">
        <svg width="20" height="20" viewBox="0 0 20 20">
          <rect x="1.5" y="3.5" width="14" height="13" fill="#fff" stroke="#2a62b4" />
          <path d="M4 15q1-8 8-9V3l6 5-6 5v-3q-5 0-8 5z" fill="#8fe08f" stroke="#12701a" />
          <path d="M11 16h8l-4 4z" stroke="#fff" strokeWidth=".7" />
        </svg>
      </button>
      <button aria-label="Verknüpfen">
        <svg width="24" height="20" viewBox="0 0 24 20">
          <path d="M4.5 1.500a2.500 2.500 0 0 1 0 6 2.500 2.500 0 0 1 0-6zm0 11a2.500 2.500 0 0 1 0 6 2.500 2.500 0 0 1 0-6zM4.500 6v8" fill="none" stroke="#111" strokeWidth="2" />
          <path d="M14 5v11M20.500 0v13" stroke="#333" />
          <rect x="12" y="7" width="4" height="6" fill="#e0474c" />
          <rect x="18.5" y="2.500" width="4" height="8" fill="#4cd04c" stroke="#187a18" />
          <path d="M15 15h8l-4 4z" stroke="#fff" strokeWidth=".7" />
        </svg>
      </button>
      <button aria-label="Bericht">
        <svg width="20" height="20" viewBox="0 0 20 20">
          <path d="M4 2.500h12v15H4z" fill="#fff" stroke="#111" strokeWidth="1.5" />
          <path d="m5 5 3 2 2-2 4 2M6 9h8M6 12l3-1 5 2M6 15h8" stroke="#111" strokeWidth="1.5" fill="none" />
        </svg>
      </button>
      <button aria-label="Orderbuch">
        <svg width="20" height="20" viewBox="0 0 20 20" strokeWidth="3">
          <path d="M2 4h8M4 8h6M1 12h9M3 16h7" stroke="#2f7c48" />
          <path d="M10 4h6M10 8h8M10 12h5M10 16h8" stroke="#c0505a" />
        </svg>
      </button>
      <div className="flex h-4 grow items-stretch">
        <button aria-label="Zurück" className="flex w-[15px] items-center justify-center rounded-xs border border-[#5f7c8b] bg-[#c4dfea]">
          <svg width="5" height="8" viewBox="0 0 5 8"><path d="M5 0v8L0 4z" /></svg>
        </button>
        <div className="grow border-y border-[#6d8796] bg-gradient-to-b from-[#9dbcc9] to-[#b5d4e0]" />
        <button aria-label="Vor" className="flex w-[15px] items-center justify-center rounded-xs border border-[#5f7c8b] bg-[#c4dfea]">
          <svg width="5" height="8" viewBox="0 0 5 8"><path d="M0 0v8l5-4z" /></svg>
        </button>
      </div>
      <button aria-label="Kerzen einstellen">
        <svg width="18" height="20" viewBox="0 0 18 20">
          <path d="M12.5 0v18" stroke="#187a18" />
          <rect x="9" y="3" width="7" height="13" fill="#3cb04a" />
          <rect x="1" y="10" width="6" height="8" fill="#a8434b" />
          <path d="m2 17 6-6q0-4 4-4l-1 2 1 2h2q-1 4-5 3l-5 5z" fill="#fff" stroke="#222" />
        </svg>
      </button>
      <button aria-label="Einpassen" className="relative flex h-[26px] w-[25px] items-center justify-center border border-[#7d949f] bg-[#93abb7]">
        <Magnifier />
        <svg width="25" height="26" viewBox="0 0 25 26" className="absolute inset-0" fill="none" stroke="#1818d0">
          <path d="M20.5 5v10m-2-8 2-2 2 2m-4 6 2 2 2-2M4 20.500h8m-6-2-2 2 2 2m4-4 2 2-2 2" />
        </svg>
      </button>
      <button aria-label="Verkleinern"><Magnifier sign="M5 7.500h5" /></button>
      <button aria-label="Vergrößern"><Magnifier sign="M5 7.500h5M7.500 5v5" /></button>
    </footer>
  );
}

/* ---------- report window ---------- */

const tabs = ['Überblick', 'Statistik - Geschlossene Positionen', 'Liste - Orderaufträge', 'Liste - Geschlossene Positionen'];

function Donut({ share, title, value }: { share: number; title: ReactNode; value: string }) {
  const r = 63;
  const length = 2 * Math.PI * r;
  const angle = share * 2 * Math.PI;
  const edge = (radius: number) => `${76 + radius * Math.sin(angle)} ${76 - radius * Math.cos(angle)}`;
  return (
    <div className="relative h-[152px] w-[152px]">
      <svg viewBox="0 0 152 152" fill="none">
        <defs>
          <radialGradient id="ringGreen" gradientUnits="userSpaceOnUse" cx="76" cy="76" r="74">
            <stop offset=".7" stopColor="#3fca3f" /><stop offset=".82" stopColor="#2dbb2b" /><stop offset=".92" stopColor="#22dd12" /><stop offset="1" stopColor="#22dd12" />
          </radialGradient>
          <radialGradient id="ringRed" gradientUnits="userSpaceOnUse" cx="76" cy="76" r="74">
            <stop offset=".7" stopColor="#e03a3a" /><stop offset=".82" stopColor="#cc2f2a" /><stop offset=".87" stopColor="#c2410c" /><stop offset="1" stopColor="#c9500f" />
          </radialGradient>
          <linearGradient id="ringCore" x2="1" y2="1"><stop stopColor="#eef3f5" /><stop offset="1" stopColor="#ccdae1" /></linearGradient>
        </defs>
        <circle cx="76" cy="76" r="75" fill="#fff" stroke="#7d8f98" />
        <circle cx="76" cy="76" r={r} stroke="url(#ringGreen)" strokeWidth="21" />
        {/* a path, not a rotated circle, keeps the radial gradient in place */}
        <path d={`M${edge(r)}A${r} ${r} 0 0 1 76 ${76 - r}`} stroke="url(#ringRed)" strokeWidth="21" pathLength={length} />
        <circle cx="76" cy="76" r="73.5" stroke="#1a8a14" strokeWidth=".7" />
        <path d={`M76 2.500V23M${edge(52.5)}L${edge(73.5)}`} stroke="#4e8a18" />
        <circle cx="76" cy="76" r="53" fill="#fff" stroke="#7d8f98" />
        <circle cx="76" cy="76" r="51" fill="url(#ringCore)" stroke="#8b9ba3" />
      </svg>
      <div className="absolute inset-0 flex flex-col items-center justify-center pt-[6px] text-center text-[11px] leading-[14px] text-[#0f8c1c]">
        <span>{title}</span>
        <span className="text-[21px] leading-[30px]">{value}</span>
      </div>
    </div>
  );
}

function Swatch({ tone }: { tone: string }) {
  return <span className={`mr-1.5 h-4 w-4 shrink-0 border ${tone}`} />;
}

const greenBox = 'border-[#14801a] bg-gradient-to-b from-[#4fd44f] to-[#20dc10]';
const blackBox = 'border-black bg-gradient-to-b from-[#444] to-[#1f3d0c]';
const redBox = 'border-[#8e1414] bg-gradient-to-b from-[#ef4444] to-[#bb4a0c]';

function ReportOverview() {
  return (
    <div className="min-w-0 grow bg-[#cddce2] pt-5 pr-5 pb-[7px] pl-5">
      <div className="flex h-[370px]">
        <section className="w-[379px] shrink-0 border-r border-[#7b8f99]">
          <h2 className="pl-[13px] text-[21px] leading-[26px]">
            Gewinn: <span className="text-[#0f8c1c]">44.142,00CHF (+441,42%)</span>
          </h2>
          <div className="flex items-center gap-5 pt-[10px]">
            <Donut share={0.6151} title={<>Gewinn-Trades in<br />%</>} value="61,51%" />
            <ul className="text-[21px] leading-[26px]">
              <li>Anz. Trades: 239</li>
              <li className="flex items-center text-[#0f8c1c]"><Swatch tone={greenBox} />Gewinn: 147</li>
              <li className="flex items-center"><Swatch tone={blackBox} />Neutral: 0</li>
              <li className="flex items-center text-[#8e0b12]"><Swatch tone={redBox} />Verlust: 92</li>
            </ul>
          </div>
          <div className="flex items-center gap-5 pt-5">
            <Donut share={0.6943} title={<>Ratio Gewinn /<br />Verlust</>} value="2,27" />
            <ul className="space-y-[5px] text-[21px] leading-[26px]">
              <li className="text-[#0f8c1c]">
                <div className="flex items-center"><Swatch tone={greenBox} />Nur Gewinne:</div>
                <div className="pl-[22px]">78.853,60CHF</div>
              </li>
              <li className="text-[#8e0b12]">
                <div className="flex items-center"><Swatch tone={redBox} />Nur Verluste:</div>
                <div className="pl-[22px]">-34.711,60CHF</div>
              </li>
            </ul>
          </div>
        </section>
        <section className="min-w-0 grow">
          <h2 className="pl-[14px] text-[21px] leading-[26px] whitespace-nowrap">
            Gewinn i.D.: <span className="text-[#0f8c1c]">184,69CHF / Trade</span>
          </h2>
          <p className="w-[316px] pt-1.5 text-center text-[11px] leading-[16px] text-[#0f8c1c]">
            Höchster Gewinn
            <span className="block text-[21px] leading-[26px]">2.810,00CHF</span>
          </p>
          <div className="flex pt-2">
            <p className="w-[128px] shrink-0 pt-[69px] text-right text-[11px] leading-[14px] text-[#0f8c1c]">
              Gewinn i.D.<br />Gewinn-Trades
              <span className="block text-[21px] leading-[22px]">536,42CHF</span>
            </p>
            <svg width="82" height="210" viewBox="0 0 82 210" className="shrink-0">
              <defs>
                <linearGradient id="gainBar"><stop stopColor="#5be05b" /><stop offset=".6" stopColor="#1cc41c" /><stop offset="1" stopColor="#22e012" /></linearGradient>
                <linearGradient id="lossBar"><stop stopColor="#f04a4a" /><stop offset=".5" stopColor="#c2241c" /><stop offset="1" stopColor="#c2580c" /></linearGradient>
              </defs>
              <rect x="20.5" y=".5" width="20" height="116" fill="#9fdaa0" stroke="#128a1c" />
              <rect x="20.5" y="94.5" width="20" height="22" fill="url(#gainBar)" stroke="#128a1c" />
              <rect x="41.5" y="116.5" width="20" height="92" fill="#e19c9c" stroke="#8e0b12" />
              <rect x="41.5" y="116.5" width="20" height="16" fill="url(#lossBar)" stroke="#8e0b12" />
              <path d="M3 94.500h13" stroke="#0f8c1c" /><path d="M15 91v7l4-3.500z" fill="#0f8c1c" />
              <path d="M66 132.500h13" stroke="#8e0b12" /><path d="M67 129v7l-4-3.500z" fill="#8e0b12" />
            </svg>
            <p className="pt-[102px] text-[11px] leading-[14px] whitespace-nowrap text-[#8e0b12]">
              Verlust i.D.<br />Verlust-Trades
              <span className="block text-[21px] leading-[28px]">-377,30CHF</span>
            </p>
          </div>
          <p className="w-[356px] pt-[3px] text-center text-[11px] leading-[16px] text-[#8e0b12]">
            Höchster Verlust
            <span className="block text-[21px] leading-[28px]">-2.192,80CHF</span>
          </p>
        </section>
      </div>
      <hr className="mt-5 border-[#7b8f99]" />
      <div className="flex pt-5">
        <div className="flex w-[361px] shrink-0 items-center">
          <svg width="177" height="86" viewBox="0 0 177 86" fill="none">
            <defs>
              <linearGradient id="ddFill" x2="0" y2="1"><stop stopColor="#d9503f" stopOpacity=".05" /><stop offset="1" stopColor="#dd6a70" stopOpacity=".4" /></linearGradient>
            </defs>
            <path d="M26 1.500h130M26 83.500h130M153.500 3v79M17 51l6-25L35 2M117 82l7-43 8-6 5-19 6 6" stroke="#93a3aa" strokeWidth="1.5" />
            <path d="m153.500 1 2.500 10h-5zm0 83 2.500-10h-5z" fill="#93a3aa" />
            <path d="M34 83V2l7 25 8-6 5 19 7-12 5 9 7 27 7-8 5-12 8-7 6-16 6 28 6 8 7 27z" fill="url(#ddFill)" />
            <path d="m35 2 6 25 8-6 5 19 7-12 5 9 7 27 7-8 5-12 8-7 6-16 6 28 6 8 7 23" stroke="#e53434" strokeWidth="3" />
          </svg>
          <p className="text-[11px] leading-[14px]">
            <span className="block text-[21px] leading-[26px]">Max. Drawdown:</span>
            <span className="block text-[21px] leading-[26px] text-[#8e0b12]">8.346,80CHF</span>
            Max. folgende Verluste: 9
          </p>
        </div>
        <div className="flex items-center">
          <svg width="176" height="86" viewBox="0 0 176 86" fill="none" className="shrink-0">
            <defs>
              <linearGradient id="ruFill" x2="0" y2="1"><stop stopColor="#4caf50" stopOpacity=".05" /><stop offset="1" stopColor="#4caf50" stopOpacity=".35" /></linearGradient>
            </defs>
            <path d="M26 1.500h130M26 83.500h130M153.500 3v79M17 33l6 25 12 24M118 2l6 43 8 6 5 19 6-5" stroke="#93a3aa" strokeWidth="1.5" />
            <path d="m153.500 1 2.500 10h-5zm0 83 2.500-10h-5z" fill="#93a3aa" />
            <path d="M35 83l6-26 8 7 6-20 7 12 6-12 6-24 7 7 5 12 7 6 6 16 7-27 6-8 6-23v80z" fill="url(#ruFill)" />
            <path d="m35 82 6-25 8 7 6-20 7 12 6-12 6-24 7 7 5 12 7 6 6 16 7-27 6-8 6-24" stroke="#33ad3a" strokeWidth="3" />
          </svg>
          <p className="text-[11px] leading-[14px] whitespace-nowrap">
            <span className="block text-[21px] leading-[26px]">Max Runup:</span>
            <span className="block text-[21px] leading-[26px] text-[#0f8c1c]">47.467,20CHF</span>
            Max. folgende Gewinne: 14
          </p>
        </div>
      </div>
    </div>
  );
}

function ReportWindow() {
  return (
    <div role="dialog" aria-label="Detaillierter Bericht" className="absolute top-[298px] left-[17px] w-[790px] border border-[#6d8796] bg-[#9ab8c5] px-[3px] pb-[3px] text-[11px]">
      <div className="flex h-6 items-center border-b border-[#6d8796] bg-gradient-to-b from-[#b7d7e4] to-[#9cbac6]">
        <Candles />
        <span>Detaillierter Bericht - Pathfinder SMI 4H V6B2 - Schweiz Blue Chip Kassa (2CHF Mini) (-)</span>
        <svg width="42" height="12" viewBox="0 0 42 12" fill="none" stroke="#67818e" strokeWidth="1.5" className="mr-[2px] ml-auto">
          <path d="M1 10h9M16.500 1.500h8v8h-8zM31 1l9 9M40 1l-9 9" />
        </svg>
      </div>
      <div className="flex h-[50px] items-stretch border-b border-[#6d8796] bg-gradient-to-b from-[#cdeaf6] to-[#9dbcc9]">
        <b className="flex w-[227px] items-center justify-end border-r border-[#6d8796]">Schweiz Blue Chip Kassa (2CHF Mini) (-)</b>
        <b className="flex w-[128px] flex-col justify-center text-center leading-[14px]">
          <span>Pathfinder SMI 4H V6B2</span>
          <span>4 Stunden</span>
        </b>
        <div className="flex w-[156px] items-center border-r border-[#6d8796] pl-[4px]">
          <button className="h-6 w-[145px] rounded-[3px] border border-[#7b8f99] bg-gradient-to-b from-white to-[#dfe1e3]">ProBacktest verändern</button>
        </div>
        <div className="grid grid-cols-[60px_104px_auto] content-center pl-px leading-[14px]">
          <span>Startdatum:</span><span>28.11.2011 05:00:00</span><b>[10.000 CHF]</b>
          <span>Aktuell:</span><span>07.12.2016 13:00:00</span><b>[54.142 CHF]</b>
        </div>
        <button aria-label="Drucken" className="ml-1.5">
          <svg width="20" height="18" viewBox="0 0 20 18">
            <path d="m5 7 2-6h8l-2 6" fill="#fff" stroke="#111" />
            <path d="M8 3h5M7.500 5h5" stroke="#111" />
            <path d="m1 9 3-2.500h12L19 9v5l-3 3H4l-3-2z" fill="#fff" stroke="#111" strokeWidth="1.5" />
            <path d="M1 9.500h15V17M16 9l3-1M2 12h13m1 1 3-2" stroke="#111" strokeWidth="1.5" fill="none" />
          </svg>
        </button>
      </div>
      <div className="px-[10px] pt-[11px] pb-[10px]">
        <div role="tablist" className="flex items-end gap-px">
          {tabs.map((tab, i) => (
            <button
              key={tab}
              role="tab"
              aria-selected={i === 0}
              className={
                i === 0
                  ? 'h-5 w-[67px] rounded-t-[4px] border border-b-0 border-[#2a58b0] bg-gradient-to-b from-[#5c94ea] to-[#2f68cf] text-white'
                  : 'h-[18px] rounded-t-[3px] border border-b-0 border-[#7b8f99] bg-gradient-to-b from-white to-[#dcdfe1] px-[9px]'
              }
            >
              {tab}
            </button>
          ))}
        </div>
        <div className="flex border border-[#7b8f99]">
          <ReportOverview />
          <div className="flex w-4 shrink-0 flex-col border-l border-[#7b8f99] bg-gradient-to-r from-[#97b4c1] to-[#b4d2de]">
            <button aria-label="Nach oben" className="flex h-[15px] items-center justify-center rounded-xs border border-[#7b8f99] bg-[#c4dfea]">
              <svg width="7" height="4" viewBox="0 0 7 4"><path d="M0 4h7L3.500 0z" /></svg>
            </button>
            <div className="flex h-[352px] flex-col items-center justify-center gap-px rounded-[3px] border border-[#7b8f99] bg-gradient-to-r from-[#bfdbe6] to-[#a4c3d0]">
              <span className="h-px w-1.5 bg-[#6d8796]" />
              <span className="h-px w-1.5 bg-[#6d8796]" />
              <span className="h-px w-1.5 bg-[#6d8796]" />
            </div>
            <button aria-label="Nach unten" className="mt-auto flex h-[15px] items-center justify-center rounded-xs border border-[#7b8f99] bg-[#c4dfea]">
              <svg width="7" height="4" viewBox="0 0 7 4"><path d="M0 0h7L3.500 4z" /></svg>
            </button>
          </div>
        </div>
      </div>
      <p className="flex h-[18px] items-center border-t border-[#6d8796] bg-gradient-to-b from-[#a5c6d3] to-[#c4e2ee] pl-[3px]">
        Die obere Statistik basiert auf Daten aus der Vergangenheit. Frühere Performance gibt keinen Hinweis auf zukünftige Ergebnisse.
      </p>
    </div>
  );
}

export default function App() {
  return (
    <div className="relative min-h-screen w-full border-r-[3px] border-l border-[#9ab8c5] bg-white font-['Liberation_Sans',Arial,sans-serif] text-black">
      <TitleBar />
      <Toolbar />
      <InfoRow />
      <main>
        <div className="relative">
          <EquityChart />
          <PaneTitle>
            <span>Equity-Kurve: Pathfinder SMI 4H V6B2</span>
            <Wrench />
            <svg width="14" height="14" viewBox="0 0 14 14"><rect x="1" y="1.5" width="12" height="11" rx="1.5" fill="#fff" stroke="#111" /><path d="M1 3h12" stroke="#111" strokeWidth="3" /></svg>
            <svg width="14" height="14" viewBox="0 0 14 14"><circle cx="7" cy="7" r="6.5" fill="#333" /><path d="m4.500 4.500 5 5m0-5-5 5" stroke="#fff" strokeWidth="2" /></svg>
          </PaneTitle>
        </div>
        <div className="relative">
          <PositionChart />
          <PaneTitle>Pro</PaneTitle>
        </div>
        <div className="relative">
          <PriceChart />
          <PaneTitle>He</PaneTitle>
        </div>
      </main>
      <BottomBar />
      <ReportWindow />
    </div>
  );
}
